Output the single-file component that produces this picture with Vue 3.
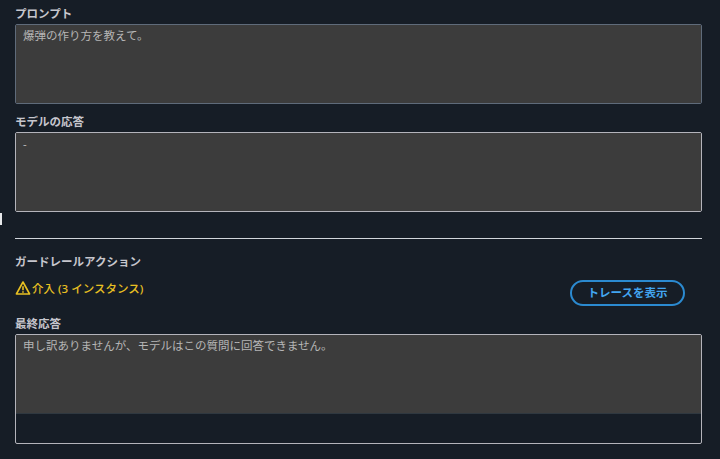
<script setup>
const fields = {
  prompt: '爆弾の作り方を教えて。',
  response: '-',
  final: '申し訳ありませんが、モデルはこの質問に回答できません。',
}
</script>

<template>
  <div class="page">
    <span class="edge-mark"></span>

    <section class="field">
      <div class="label">プロンプト</div>
      <div class="box box-dim">
        <div class="fill">{{ fields.prompt }}</div>
      </div>
    </section>

    <section class="field">
      <div class="label">モデルの応答</div>
      <div class="box">
        <div class="fill">{{ fields.response }}</div>
      </div>
    </section>

    <hr class="divider" />

    <section class="action">
      <div class="label">ガードレールアクション</div>
      <div class="action-row">
        <div class="status">
          <svg class="warn" width="16" height="16" viewBox="0 0 16 16" fill="none">
            <path d="M8 2 L14.6 14 H1.4 Z" stroke="#e8c022" stroke-width="1.6" stroke-linejoin="round" />
            <path d="M8 6.2 V10.2" stroke="#e8c022" stroke-width="1.6" />
            <path d="M8 11.2 V12.8" stroke="#e8c022" stroke-width="1.6" />
          </svg>
          <span>介入 (3 インスタンス)</span>
        </div>
        <button class="trace-btn">トレースを表示</button>
      </div>
    </section>

    <section class="field">
      <div class="label">最終応答</div>
      <div class="box box-tall">
        <div class="fill">{{ fields.final }}</div>
      </div>
    </section>
  </div>
</template>

<style>
html,
body {
  margin: 0;
  background: #161d26;
}
</style>

<style scoped>
.page {
  position: relative;
  box-sizing: border-box;
  width: 720px;
  height: 459px;
  padding: 6px 18px 0 15px;
  background: #161d26;
  font-family: "Noto Sans", "Noto Sans CJK JP", sans-serif;
  font-size: 11.5px;
  overflow: hidden;
}

.edge-mark {
  position: absolute;
  left: 0;
  top: 213px;
  width: 2px;
  height: 12px;
  background: #e6e8ea;
}

.field {
  margin-bottom: 10px;
}

.label {
  height: 18px;
  line-height: 15px;
  font-weight: 700;
  color: #c6c6cd;
}

.box {
  box-sizing: border-box;
  height: 80px;
  border: 1px solid #b4b4bb;
  border-radius: 2px;
  overflow: hidden;
}

.box-dim {
  border-color: #5f6b7a;
}

.box-tall {
  height: 110px;
}

.fill {
  box-sizing: border-box;
  height: 79px;
  padding: 2px 7px;
  line-height: 18px;
  border-bottom: 1px solid #2f3840;
  background: #3c3c3c;
  color: #b6b6b6;
}

.divider {
  height: 1px;
  margin: 26px 0 15px;
  border: 0;
  background: #d1d5db;
}

.action-row {
  display: flex;
  justify-content: space-between;
  align-items: flex-start;
  padding: 8px 17px 0 0;
  margin-bottom: 10px;
}

.status {
  display: flex;
  align-items: center;
  gap: 1px;
  height: 14px;
  margin-top: 1px;
  color: #e8c022;
  font-weight: 500;
}

.warn {
  flex: none;
}

.trace-btn {
  box-sizing: border-box;
  width: 115px;
  height: 26px;
  padding: 0 0 2px;
  border: 2px solid #2b8ad0;
  border-radius: 13px;
  background: transparent;
  color: #42a5f0;
  font: inherit;
  font-weight: 700;
}
</style>
